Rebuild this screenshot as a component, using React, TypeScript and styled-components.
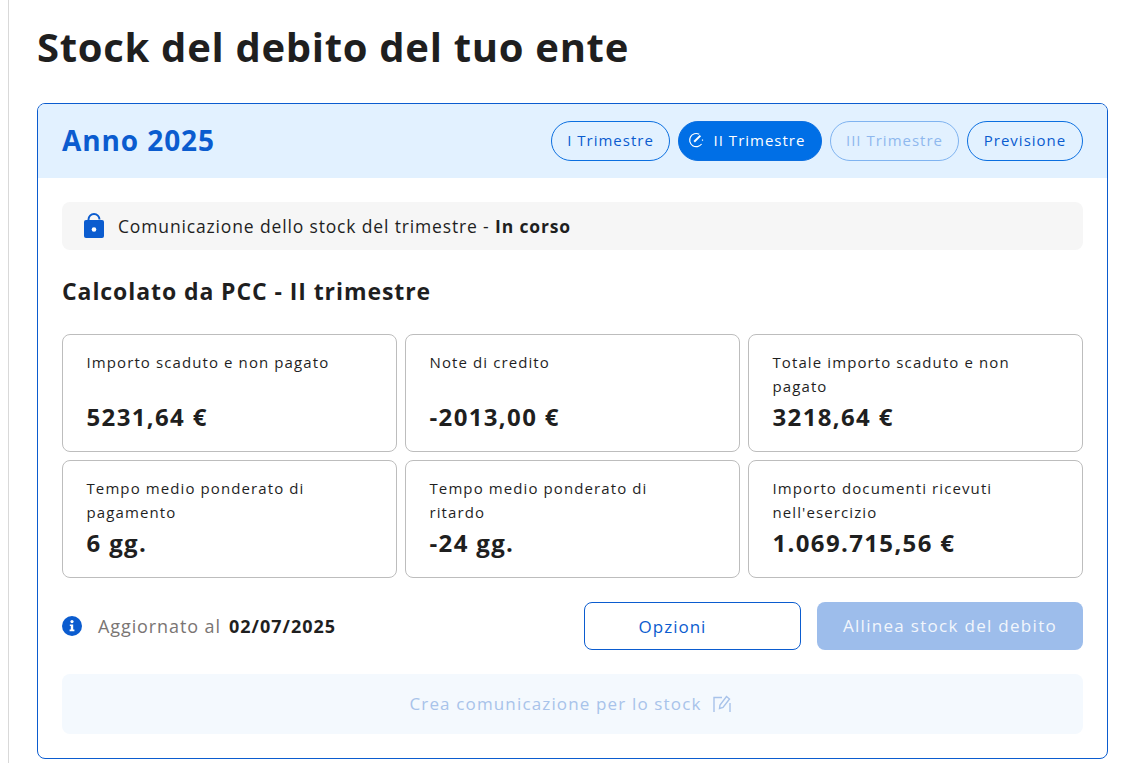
import styled, { createGlobalStyle } from "styled-components";

const GlobalStyle = createGlobalStyle`
  html, body {
    margin: 0;
    padding: 0;
    background: #fff;
    color: #1f1f1f;
    font-family: "Open Sans", "Noto Sans", sans-serif;
  }
  * { box-sizing: border-box; }
`;

const tiles = [
  { label: "Importo scaduto e non pagato", value: "5231,64 €" },
  { label: "Note di credito", value: "-2013,00 €" },
  { label: "Totale importo scaduto e non pagato", value: "3218,64 €" },
  { label: "Tempo medio ponderato di pagamento", value: "6 gg." },
  { label: "Tempo medio ponderato di ritardo", value: "-24 gg." },
  { label: "Importo documenti ricevuti nell'esercizio", value: "1.069.715,56 €" },
];

const App = () => {
  return (
    <>
      <GlobalStyle />
      <Page>
        <Title>Stock del debito del tuo ente</Title>
        <Card>
          <CardHeader>
            <Year>Anno 2025</Year>
            <Tabs>
              <Tab $width={119}>I Trimestre</Tab>
              <Tab $width={144} $active>
                <GaugeIcon />
                II Trimestre
              </Tab>
              <Tab $width={129} $disabled>III Trimestre</Tab>
              <Tab $width={116}>Previsione</Tab>
            </Tabs>
          </CardHeader>
          <CardBody>
            <Status>
              <LockIcon />
              <span>
                Comunicazione dello stock del trimestre - <strong>In corso</strong>
              </span>
            </Status>
            <SectionTitle>Calcolato da PCC - II trimestre</SectionTitle>
            <TileGrid>
              {tiles.map((tile) => (
                <Tile key={tile.label}>
                  <TileLabel>{tile.label}</TileLabel>
                  <TileValue>{tile.value}</TileValue>
                </Tile>
              ))}
            </TileGrid>
            <Footer>
              <Updated>
                <InfoIcon />
                <UpdatedText>Aggiornato al</UpdatedText>
                <UpdatedDate>02/07/2025</UpdatedDate>
              </Updated>
              <Actions>
                <OutlineButton>Opzioni</OutlineButton>
                <FilledButton>Allinea stock del debito</FilledButton>
              </Actions>
            </Footer>
            <CreateBar>
              Crea comunicazione per lo stock
              <EditIcon />
            </CreateBar>
          </CardBody>
        </Card>
      </Page>
    </>
  );
};

const LockIcon = () => (
  <svg width="20" height="25" viewBox="0 0 20 25">
    <path d="M4.5 8V6.5a5.5 5.5 0 0 1 11 0" fill="none" stroke="#0b5ccf" strokeWidth="2" />
    <rect x="0" y="7" width="20" height="18" rx="2" fill="#0b5ccf" />
    <circle cx="10" cy="16.5" r="2.3" fill="#fff" />
  </svg>
);

const GaugeIcon = () => (
  <svg width="16" height="16" viewBox="0 0 16 16" fill="none" stroke="#fff" strokeWidth="1.2">
    <path d="M11.2 2.2A6.6 6.6 0 1 0 13.6 12" />
    <path d="M6.2 9.8 12.4 3.6" strokeWidth="2" />
    <path d="M14.5 7.4v1.4" />
  </svg>
);

const InfoIcon = () => (
  <svg width="20" height="20" viewBox="0 0 20 20">
    <circle cx="10" cy="10" r="10" fill="#0b5ccf" />
    <circle cx="10" cy="5.6" r="1.6" fill="#fff" />
    <path d="M7.8 8.4h3.4v5.2h1.2v1.6H7.6v-1.6h1.2v-3.6h-1z" fill="#fff" />
  </svg>
);

const EditIcon = () => (
  <svg width="20" height="20" viewBox="0 0 20 20" fill="none" stroke="#a8c3ea" strokeWidth="1.4">
    <path d="M10 3.5H2V18" />
    <path d="M18 9V18" />
    <path d="M7.5 14.5 8 11 14.5 2.5 17.5 5 11 13.5z" />
  </svg>
);

const Page = styled.div`
  margin-left: 8px;
  border-left: 1px solid #d9d9d9;
  padding: 0 27px 4px 28px;
  min-height: 763px;
  overflow: hidden;
`;

const Title = styled.h1`
  margin: 0;
  padding-top: 20px;
  height: 103px;
  font-size: 40px;
  line-height: 54px;
  font-weight: 700;
  letter-spacing: 0.7px;
  color: #1f1f1f;
`;

const Card = styled.section`
  width: 1071px;
  height: 656px;
  border: 1px solid #0b5ccf;
  border-radius: 8px;
  overflow: hidden;
`;

const CardHeader = styled.header`
  height: 74px;
  background: #e2f1ff;
  display: flex;
  align-items: center;
  justify-content: space-between;
  padding: 0 24px;
`;

const Year = styled.h2`
  margin: 0;
  padding-bottom: 2px;
  font-size: 28px;
  line-height: 36px;
  font-weight: 700;
  letter-spacing: 0.9px;
  color: #0b5ccf;
`;

const Tabs = styled.div`
  display: flex;
  gap: 8px;
`;

const Tab = styled.div<{ $width: number; $active?: boolean; $disabled?: boolean }>`
  width: ${(p) => p.$width}px;
  height: 40px;
  border-radius: 20px;
  display: flex;
  align-items: center;
  justify-content: center;
  gap: 10px;
  padding: 0 ${(p) => (p.$active ? "7px" : "0")} 2px 0;
  font-size: 15px;
  letter-spacing: 1px;
  border: 1px solid ${(p) => (p.$disabled ? "#7fb3f0" : "#0b6fe0")};
  background: ${(p) => (p.$active ? "#006fe6" : "transparent")};
  color: ${(p) => (p.$active ? "#fff" : p.$disabled ? "#8fb8ee" : "#0b5ccf")};
`;

const CardBody = styled.div`
  padding: 24px 24px 0;
`;

const Status = styled.div`
  height: 48px;
  background: #f6f6f6;
  border-radius: 8px;
  display: flex;
  align-items: center;
  gap: 14px;
  padding: 0 0 1px 22px;
  font-size: 17.5px;
  letter-spacing: 0.85px;
  strong { font-weight: 700; }
`;

const SectionTitle = styled.h3`
  margin: 0;
  padding-top: 26px;
  height: 84px;
  font-size: 23px;
  line-height: 30px;
  font-weight: 700;
  letter-spacing: 0.92px;
`;

const TileGrid = styled.div`
  display: grid;
  grid-template-columns: repeat(3, 335px);
  grid-auto-rows: 118px;
  gap: 8px;
`;

const Tile = styled.div`
  border: 1px solid #bdbdbd;
  border-radius: 8px;
  padding: 15px 44px 18px 23.5px;
  display: flex;
  flex-direction: column;
  justify-content: space-between;
`;

const TileLabel = styled.div`
  font-size: 15px;
  line-height: 24px;
  letter-spacing: 1.1px;
`;

const TileValue = styled.div`
  font-size: 24px;
  line-height: 32px;
  font-weight: 700;
  letter-spacing: 1.35px;
  white-space: nowrap;
`;

const Footer = styled.div`
  display: flex;
  justify-content: space-between;
  align-items: center;
  margin-top: 24px;
`;

const Updated = styled.div`
  display: flex;
  align-items: center;
  font-size: 18px;
  letter-spacing: 0.9px;
`;

const UpdatedText = styled.span`
  color: #7a7573;
  margin: 0 8px 0 16px;
`;

const UpdatedDate = styled.span`
  font-weight: 700;
  letter-spacing: 1px;
`;

const Actions = styled.div`
  display: flex;
  gap: 16px;
`;

const OutlineButton = styled.button`
  width: 217px;
  height: 48px;
  padding: 0 40px 0 0;
  background: #fff;
  border: 1px solid #0b5ccf;
  border-radius: 8px;
  color: #0b5ccf;
  font: inherit;
  font-size: 17px;
  letter-spacing: 1px;
`;

const FilledButton = styled.button`
  width: 266px;
  height: 48px;
  padding: 0 0 2px;
  background: #9dbdeb;
  border: 0;
  border-radius: 8px;
  color: #f2f6fc;
  font: inherit;
  font-size: 17px;
  font-weight: 500;
  letter-spacing: 1.3px;
`;

const CreateBar = styled.div`
  margin-top: 24px;
  height: 60px;
  padding: 0 4px 1px 0;
  background: #f4f9fe;
  border-radius: 8px;
  display: flex;
  align-items: center;
  justify-content: center;
  gap: 10px;
  color: #a8c3ea;
  font-size: 17px;
  letter-spacing: 1.15px;
`;

export default App;
